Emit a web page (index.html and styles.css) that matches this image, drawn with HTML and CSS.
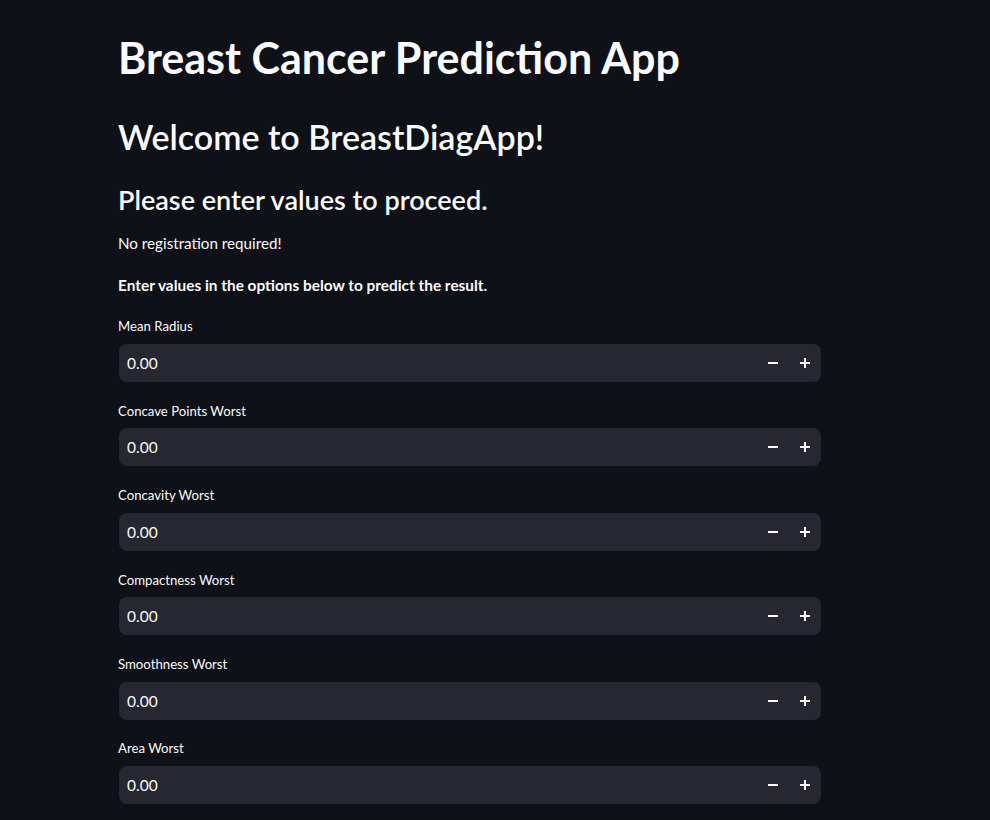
FILE: index.html
```html
<!DOCTYPE html>
<html>
<head>
<meta charset="utf-8">
<link rel="stylesheet" href="styles.css">
</head>
<body>
<main class="main">
  <h1 class="title">Breast Cancer Prediction App</h1>
  <h2 class="subtitle">Welcome to BreastDiagApp!</h2>
  <h3 class="heading">Please enter values to proceed.</h3>
  <p class="text">No registration required!</p>
  <p class="text bold">Enter values in the options below to predict the result.</p>
  <div class="fields">
    <div class="field">
      <label class="label">Mean Radius</label>
      <div class="input"><span class="value">0.00</span><span class="btns"><span class="btn"><svg width="10" height="10" viewBox="0 0 10 10"><rect x="0" y="4" width="10" height="2" fill="#fafafa"/></svg></span><span class="btn"><svg width="10" height="10" viewBox="0 0 10 10"><rect x="0" y="4" width="10" height="2" fill="#fafafa"/><rect x="4" y="0" width="2" height="10" fill="#fafafa"/></svg></span></span></div>
    </div>
    <div class="field">
      <label class="label">Concave Points Worst</label>
      <div class="input"><span class="value">0.00</span><span class="btns"><span class="btn"><svg width="10" height="10" viewBox="0 0 10 10"><rect x="0" y="4" width="10" height="2" fill="#fafafa"/></svg></span><span class="btn"><svg width="10" height="10" viewBox="0 0 10 10"><rect x="0" y="4" width="10" height="2" fill="#fafafa"/><rect x="4" y="0" width="2" height="10" fill="#fafafa"/></svg></span></span></div>
    </div>
    <div class="field">
      <label class="label">Concavity Worst</label>
      <div class="input"><span class="value">0.00</span><span class="btns"><span class="btn"><svg width="10" height="10" viewBox="0 0 10 10"><rect x="0" y="4" width="10" height="2" fill="#fafafa"/></svg></span><span class="btn"><svg width="10" height="10" viewBox="0 0 10 10"><rect x="0" y="4" width="10" height="2" fill="#fafafa"/><rect x="4" y="0" width="2" height="10" fill="#fafafa"/></svg></span></span></div>
    </div>
    <div class="field">
      <label class="label">Compactness Worst</label>
      <div class="input"><span class="value">0.00</span><span class="btns"><span class="btn"><svg width="10" height="10" viewBox="0 0 10 10"><rect x="0" y="4" width="10" height="2" fill="#fafafa"/></svg></span><span class="btn"><svg width="10" height="10" viewBox="0 0 10 10"><rect x="0" y="4" width="10" height="2" fill="#fafafa"/><rect x="4" y="0" width="2" height="10" fill="#fafafa"/></svg></span></span></div>
    </div>
    <div class="field">
      <label class="label">Smoothness Worst</label>
      <div class="input"><span class="value">0.00</span><span class="btns"><span class="btn"><svg width="10" height="10" viewBox="0 0 10 10"><rect x="0" y="4" width="10" height="2" fill="#fafafa"/></svg></span><span class="btn"><svg width="10" height="10" viewBox="0 0 10 10"><rect x="0" y="4" width="10" height="2" fill="#fafafa"/><rect x="4" y="0" width="2" height="10" fill="#fafafa"/></svg></span></span></div>
    </div>
    <div class="field">
      <label class="label">Area Worst</label>
      <div class="input"><span class="value">0.00</span><span class="btns"><span class="btn"><svg width="10" height="10" viewBox="0 0 10 10"><rect x="0" y="4" width="10" height="2" fill="#fafafa"/></svg></span><span class="btn"><svg width="10" height="10" viewBox="0 0 10 10"><rect x="0" y="4" width="10" height="2" fill="#fafafa"/><rect x="4" y="0" width="2" height="10" fill="#fafafa"/></svg></span></span></div>
    </div>
  </div>
</main>
</body>
</html>
```
FILE: styles.css
```css
html, body {
  margin: 0;
  padding: 0;
  background: #0e1117;
  color: #fafafa;
  font-family: "Lato", "Noto Sans", sans-serif;
  overflow: hidden;
  height: 820px;
}
.main {
  margin-left: 118px;
  width: 704px;
  padding-top: 32px;
}
.title {
  margin: 0;
  font-size: 43px;
  line-height: 52.8px;
  font-weight: 700;
}
.subtitle {
  margin: 30.6px 0 0;
  font-size: 34px;
  line-height: 43.2px;
  font-weight: 600;
}
.heading {
  margin: 24.6px 0 0;
  font-size: 27px;
  line-height: 33.6px;
  font-weight: 600;
}
.text {
  margin: 14.4px 0 0;
  font-size: 15.2px;
  line-height: 25.6px;
  font-weight: 400;
}
.text.bold {
  margin-top: 16.4px;
  font-weight: 700;
  font-size: 15.4px;
}
.fields {
  margin-top: 17.7px;
  display: flex;
  flex-direction: column;
  gap: 18.9px;
}
.field {
  display: flex;
  flex-direction: column;
  gap: 6.5px;
}
.label {
  font-size: 13.2px;
  line-height: 21px;
  height: 21px;
}
.input {
  height: 38px;
  margin-left: 1px;
  width: 702px;
  background: #262730;
  border-radius: 8px;
  display: flex;
  align-items: center;
  justify-content: space-between;
}
.value {
  padding-left: 8px;
  font-size: 15.5px;
}
.btns {
  display: flex;
  height: 100%;
}
.btn {
  width: 32px;
  height: 100%;
  display: flex;
  align-items: center;
  justify-content: center;
}
```
